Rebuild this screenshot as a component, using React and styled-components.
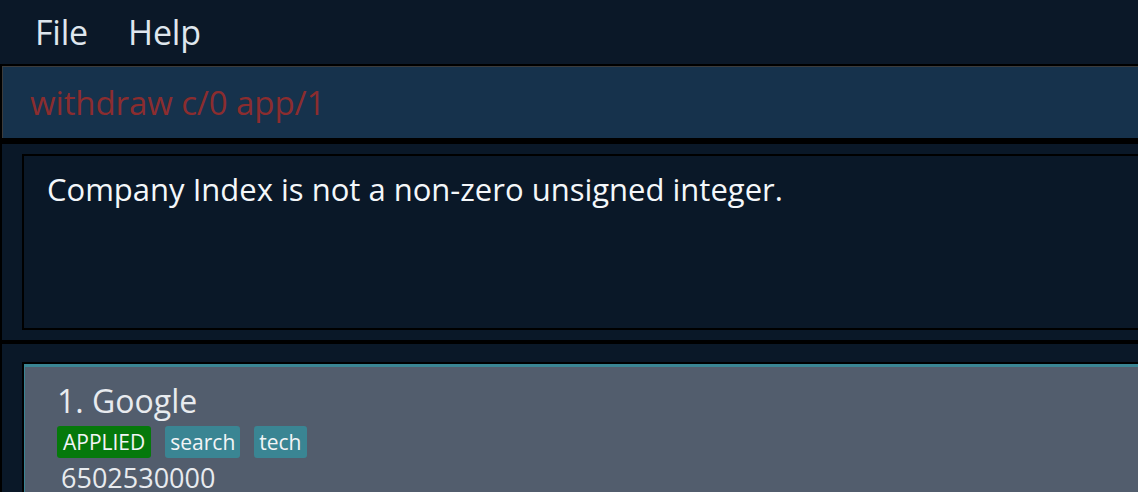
import React from 'react'
import styled, { createGlobalStyle } from 'styled-components'

const GlobalStyle = createGlobalStyle`
  *, *::before, *::after {
    box-sizing: border-box;
  }
  html, body {
    margin: 0;
    padding: 0;
    background: #0b1828;
    overflow: hidden;
  }
  body {
    font-family: 'Open Sans', 'Noto Sans', sans-serif;
  }
`

const Window = styled.div`
  width: 1138px;
  height: 492px;
  display: flex;
  flex-direction: column;
  background: #0b1828;
  overflow: hidden;
  & > * {
    flex-shrink: 0;
  }
`

const MenuBar = styled.div`
  height: 64px;
  display: flex;
  align-items: center;
  gap: 40px;
  padding-left: 35px;
  background: #0b1828;
`

const MenuItem = styled.span`
  font-size: 34px;
  color: #dfe6ee;
  letter-spacing: -0.2px;
`

const CommandPane = styled.div`
  background: #000;
  padding: 2px 0 6px 2px;
`

const CommandField = styled.div`
  height: 72px;
  display: flex;
  align-items: center;
  padding-left: 27px;
  background: #16324c;
  border-top: 1px solid #3c3c3c;
  border-left: 1px solid #3c3c3c;
  font-size: 33px;
  color: #8b2d2f;
  letter-spacing: -0.1px;
`

const Pane = styled.div`
  background: #0a1828;
  border-left: 2px solid #000;
  padding: ${p => p.$pad};
`

const ListPane = styled(Pane)`
  flex: 1 1 auto;
  display: flex;
`

const ResultBox = styled.div`
  height: 176px;
  border: 2px solid #000;
  border-right: none;
  padding: 12px 0 0 23px;
  font-size: 31px;
  color: #f4f7fa;
`

const Divider = styled.div`
  height: 4px;
  background: #000;
`

const Card = styled.div`
  flex: 1;
  background: #525d6d;
  border: 2px solid #000;
  border-right: none;
  box-shadow: inset 1px 3px 0 #3a8594;
  padding: 17px 0 0 33px;
  color: #e8ebef;
`

const Title = styled.div`
  font-size: 32px;
  line-height: 40px;
`

const TagRow = styled.div`
  display: flex;
  gap: 14px;
  margin-top: 5px;
`

const Tag = styled.span`
  height: 32px;
  display: inline-flex;
  align-items: center;
  padding: 0 ${p => (p.$wide ? 6 : 5)}px;
  border-radius: 3px;
  background: ${p => p.$bg};
  color: #f2f4f6;
  font-size: 21px;
`

const Phone = styled.div`
  font-size: 27px;
  line-height: 36px;
  margin-top: 2px;
  padding-left: 4px;
`

export default function App() {
  return (
    <Window>
      <GlobalStyle />
      <MenuBar>
        <MenuItem>File</MenuItem>
        <MenuItem>Help</MenuItem>
      </MenuBar>
      <CommandPane>
        <CommandField>withdraw c/0 app/1</CommandField>
      </CommandPane>
      <Pane $pad="10px 0 10px 20px">
        <ResultBox>Company Index is not a non-zero unsigned integer.</ResultBox>
      </Pane>
      <Divider />
      <ListPane $pad="18px 0 0 20px">
        <Card>
          <Title>1. Google</Title>
          <TagRow>
            <Tag $bg="#05790b" $wide>APPLIED</Tag>
            <Tag $bg="#3a8593">search</Tag>
            <Tag $bg="#3a8593">tech</Tag>
          </TagRow>
          <Phone>6502530000</Phone>
        </Card>
      </ListPane>
    </Window>
  )
}
